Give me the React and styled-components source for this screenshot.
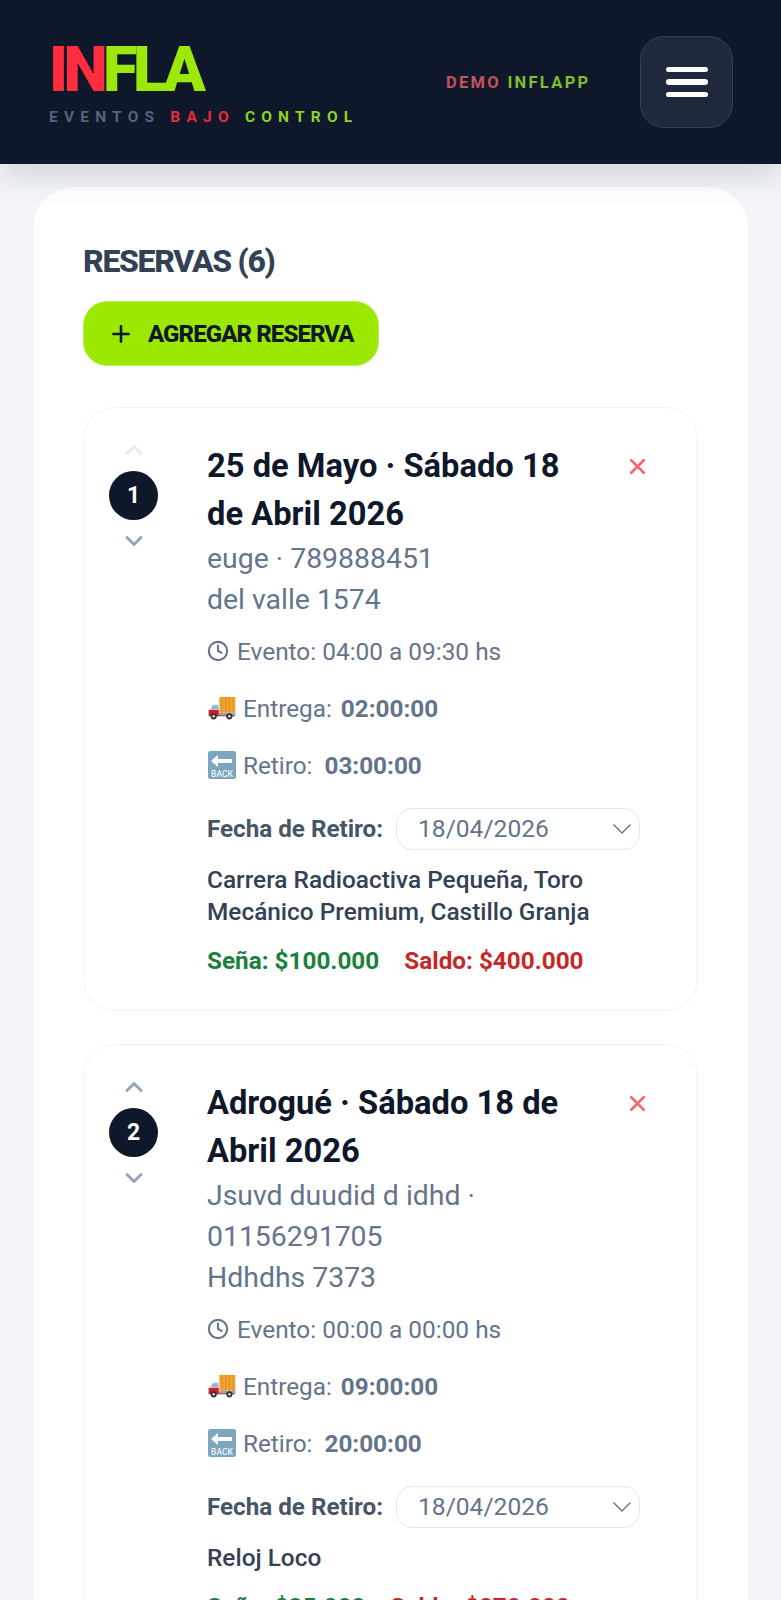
import React from 'react'
import styled, { createGlobalStyle } from 'styled-components'
import { ChevronUp, ChevronDown, Clock, Plus, X } from 'lucide-react'

const GlobalStyle = createGlobalStyle`
    html, body {
        margin: 0;
        padding: 0;
        background: #f3f5f8;
        font-family: Roboto, "Liberation Sans", sans-serif;
    }
    * { box-sizing: border-box; }
`

const reservas = [
    {
        id: 1,
        title: '25 de Mayo · Sábado 18 de Abril 2026',
        contact: 'euge · 789888451',
        address: 'del valle 1574',
        evento: '04:00 a 09:30 hs',
        entrega: '02:00:00',
        retiro: '03:00:00',
        fecha: '18/04/2026',
        items: 'Carrera Radioactiva Pequeña, Toro Mecánico Premium, Castillo Granja',
        sena: '$100.000',
        saldo: '$400.000',
        first: true,
    },
    {
        id: 2,
        title: 'Adrogué · Sábado 18 de Abril 2026',
        contact: 'Jsuvd duudid d idhd · 01156291705',
        address: 'Hdhdhs 7373',
        evento: '00:00 a 00:00 hs',
        entrega: '09:00:00',
        retiro: '20:00:00',
        fecha: '18/04/2026',
        items: 'Reloj Loco',
        sena: '$35.000',
        saldo: '$270.000',
    },
]

const TruckIcon = () => (
    <svg width="28" height="24" viewBox="0 0 30 26">
        <rect x="12" y="1" width="17.5" height="17" fill="#f2a532" />
        <path d="M15 1v17M19 1v17M23 1v17M27 1v17" stroke="#d98a1f" strokeWidth="1" />
        <path d="M1 18l2-6 3-3h6v10H1z" fill="#e4e8ec" />
        <path d="M5 10h6v4H3z" fill="#8fb8d0" />
        <path d="M0.5 15h11v5h17.5v2H0.5z" fill="#c8202c" />
        <rect x="12" y="18" width="17.5" height="3" fill="#9aa3ab" />
        <circle cx="6" cy="22" r="3.4" fill="#333" />
        <circle cx="6" cy="22" r="1.4" fill="#ddd" />
        <circle cx="23" cy="22" r="3.4" fill="#333" />
        <circle cx="23" cy="22" r="1.4" fill="#ddd" />
    </svg>
)

const BackIcon = () => (
    <svg width="28" height="28" viewBox="0 0 28 28">
        <rect width="28" height="28" rx="2.5" fill="#7ba6be" />
        <path d="M3 10l7-6v4h14v4H10v4z" fill="#fff" />
        <text x="14" y="25.5" fontSize="8.5" fontWeight="500" fontFamily="Roboto" fill="#eef4f8" textAnchor="middle">BACK</text>
    </svg>
)

const SelectArrow = () => (
    <svg width="20" height="12" viewBox="0 0 20 12">
        <path d="M1.5 1.5L10 10l8.5-8.5" fill="none" stroke="#64748b" strokeWidth="1.4" />
    </svg>
)

const ReservaCard = ({ r }) => (
    <Card>
        <Orden>
            <Flecha $off={r.first}><ChevronUp size={28} strokeWidth={2.5} /></Flecha>
            <Numero>{r.id}</Numero>
            <Flecha><ChevronDown size={28} strokeWidth={2.5} /></Flecha>
        </Orden>
        <Info>
            <TopRow>
                <Titulo>{r.title}</Titulo>
                <Cerrar><X size={25} strokeWidth={2.6} /></Cerrar>
            </TopRow>
            <Contacto>{r.contact}</Contacto>
            <Contacto>{r.address}</Contacto>
            <Evento><Clock size={22} strokeWidth={2.3} />Evento: {r.evento}</Evento>
            <Horario><TruckIcon />Entrega:<b>{r.entrega}</b></Horario>
            <Horario $retiro><BackIcon />Retiro:<b>{r.retiro}</b></Horario>
            <FechaRow>
                <FechaLabel>Fecha de Retiro:</FechaLabel>
                <FechaSelect>
                    {r.fecha}
                    <SelectArrow />
                </FechaSelect>
            </FechaRow>
            <Items>{r.items}</Items>
            <Montos>
                <Sena>Seña: {r.sena}</Sena>
                <Saldo>Saldo: {r.saldo}</Saldo>
            </Montos>
        </Info>
    </Card>
)

export default function App() {
    return (
        <Page>
            <GlobalStyle />
            <Header>
                <Brand>
                    <Logo><Red>IN</Red><Lime>FLA</Lime></Logo>
                    <Tagline>EVENTOS <TagRed>BAJO</TagRed> <TagLime>CONTROL</TagLime></Tagline>
                </Brand>
                <Demo><DemoRed>DEMO</DemoRed> <DemoLime>INFLAPP</DemoLime></Demo>
                <MenuButton aria-label="menu">
                    <span /><span /><span />
                </MenuButton>
            </Header>
            <Panel>
                <Heading>RESERVAS (6)</Heading>
                <AddButton><Plus size={26} strokeWidth={2.4} />AGREGAR RESERVA</AddButton>
                <Lista>
                    {reservas.map(r => <ReservaCard key={r.id} r={r} />)}
                </Lista>
            </Panel>
        </Page>
    )
}

const Page = styled.div`
    width: 781px;
    height: 1600px;
    overflow: hidden;
    background: #f3f5f8;
`
const Header = styled.header`
    position: relative;
    z-index: 1;
    height: 164px;
    background: #0f172a;
    padding: 0 48px 0 49px;
    display: flex;
    align-items: center;
    box-shadow: 0 12px 30px rgba(15, 23, 42, .14);
`
const Brand = styled.div`
    display: flex;
    flex-direction: column;
    width: 397px;
    padding-top: 6px;
`
const Logo = styled.div`
    font-size: 63px;
    line-height: 50px;
    height: 50px;
    font-weight: 900;
    letter-spacing: -4.6px;
`
const Red = styled.span`
    color: #ff2d3d;
`
const Lime = styled.span`
    color: #9be80a;
`
const Tagline = styled.div`
    margin-top: 13px;
    font-size: 15.5px;
    line-height: 18px;
    font-weight: 700;
    letter-spacing: 6.2px;
    color: #56637d;
    white-space: nowrap;
`
const TagRed = styled.span`
    color: #e52e3f;
`
const TagLime = styled.span`
    color: #8fd41e;
`
const Demo = styled.div`
    font-size: 16.5px;
    font-weight: 700;
    letter-spacing: 2.3px;
    white-space: nowrap;
`
const DemoRed = styled.span`
    color: #c9505f;
`
const DemoLime = styled.span`
    color: #84bd2e;
`
const MenuButton = styled.button`
    margin-left: auto;
    width: 93px;
    height: 92px;
    flex: none;
    border-radius: 24px;
    background: #1e293b;
    border: 1.5px solid #334155;
    padding: 0;
    display: flex;
    flex-direction: column;
    align-items: center;
    justify-content: center;
    gap: 7px;

    span {
        display: block;
        width: 42px;
        height: 5.5px;
        border-radius: 3px;
        background: #fff;
    }
`
const Panel = styled.main`
    margin: 23px 33px 0;
    background: #fff;
    border-radius: 40px;
    padding: 52px 50px 0;
    box-shadow: 0 1px 3px rgba(15, 23, 42, .04);
`
const Heading = styled.h2`
    margin: 0;
    font-size: 32px;
    line-height: 44px;
    font-weight: 800;
    letter-spacing: -1.3px;
    color: #334155;
`
const AddButton = styled.button`
    margin-top: 18px;
    height: 65px;
    width: 296px;
    border: 1px solid #b8ee55;
    border-radius: 24px;
    background: #9be800;
    color: #0f172a;
    font-family: inherit;
    font-size: 24px;
    font-weight: 800;
    letter-spacing: -.9px;
    display: flex;
    align-items: center;
    gap: 14px;
    padding: 0 0 0 24px;
    white-space: nowrap;
`
const Lista = styled.div`
    margin-top: 41px;
    display: flex;
    flex-direction: column;
    gap: 33px;
`
const Card = styled.article`
    width: 615px;
    border: 1px solid #f1f3f6;
    border-radius: 32px;
    padding: 30px 40px 0 25px;
    min-height: 604px;
    display: flex;
    gap: 49px;
`
const Orden = styled.div`
    flex: none;
    width: 49px;
    display: flex;
    flex-direction: column;
    align-items: center;
`
const Flecha = styled.div`
    height: 24px;
    display: flex;
    align-items: center;
    color: ${p => p.$off ? '#e7ecf2' : '#94a3b8'};

    svg {
        flex: none;
    }
`
const Numero = styled.div`
    margin: 9px 0;
    width: 49px;
    height: 49px;
    border-radius: 50%;
    background: #0f172a;
    color: #fff;
    font-size: 23px;
    font-weight: 700;
    display: flex;
    align-items: center;
    justify-content: center;
`
const Info = styled.div`
    flex: 1;
    min-width: 0;
    padding-top: 4px;
`
const TopRow = styled.div`
    display: flex;
    align-items: flex-start;
    justify-content: space-between;
`
const Titulo = styled.h3`
    margin: 0;
    width: 370px;
    font-size: 32.7px;
    line-height: 48px;
    font-weight: 700;
    color: #0f172a;
`
const Cerrar = styled.div`
    margin-top: 12px;
    margin-right: 7px;
    color: #ec6a6f;
    display: flex;
`
const Contacto = styled.div`
    font-size: 28.4px;
    line-height: 41px;
    color: #64748b;
    width: 370px;
`
const Evento = styled.div`
    margin-top: 11px;
    height: 40px;
    font-size: 24.4px;
    color: #64748b;
    display: flex;
    align-items: center;
    gap: 8px;
`
const Horario = styled.div`
    margin-top: 17px;
    height: 40px;
    font-size: 24.3px;
    color: #64748b;
    display: flex;
    align-items: center;
    gap: 7px;

    svg {
        flex: none;
        margin-left: 1px;
    }

    b {
        font-weight: 700;
        margin-left: ${p => p.$retiro ? '5px' : '2px'};
    }
`
const FechaRow = styled.div`
    margin-top: 22px;
    display: flex;
    align-items: center;
    gap: 13px;
    height: 43px;
`
const FechaLabel = styled.span`
    font-size: 24.2px;
    font-weight: 700;
    color: #475569;
    white-space: nowrap;
`
const FechaSelect = styled.div`
    width: 244px;
    height: 42px;
    border: 1px solid #e2e8f0;
    border-radius: 16px;
    padding: 0 7px 0 21px;
    font-size: 24.6px;
    color: #64748b;
    display: flex;
    align-items: center;
    justify-content: space-between;
`
const Items = styled.div`
    margin-top: 14px;
    width: 400px;
    font-size: 24.4px;
    line-height: 32px;
    font-weight: 500;
    color: #334155;
`
const Montos = styled.div`
    margin-top: 16px;
    display: flex;
    gap: 25px;
    font-size: 24.3px;
    line-height: 34px;
    font-weight: 700;
`
const Sena = styled.span`
    color: #1b7f3e;
`
const Saldo = styled.span`
    color: #c62828;
`
